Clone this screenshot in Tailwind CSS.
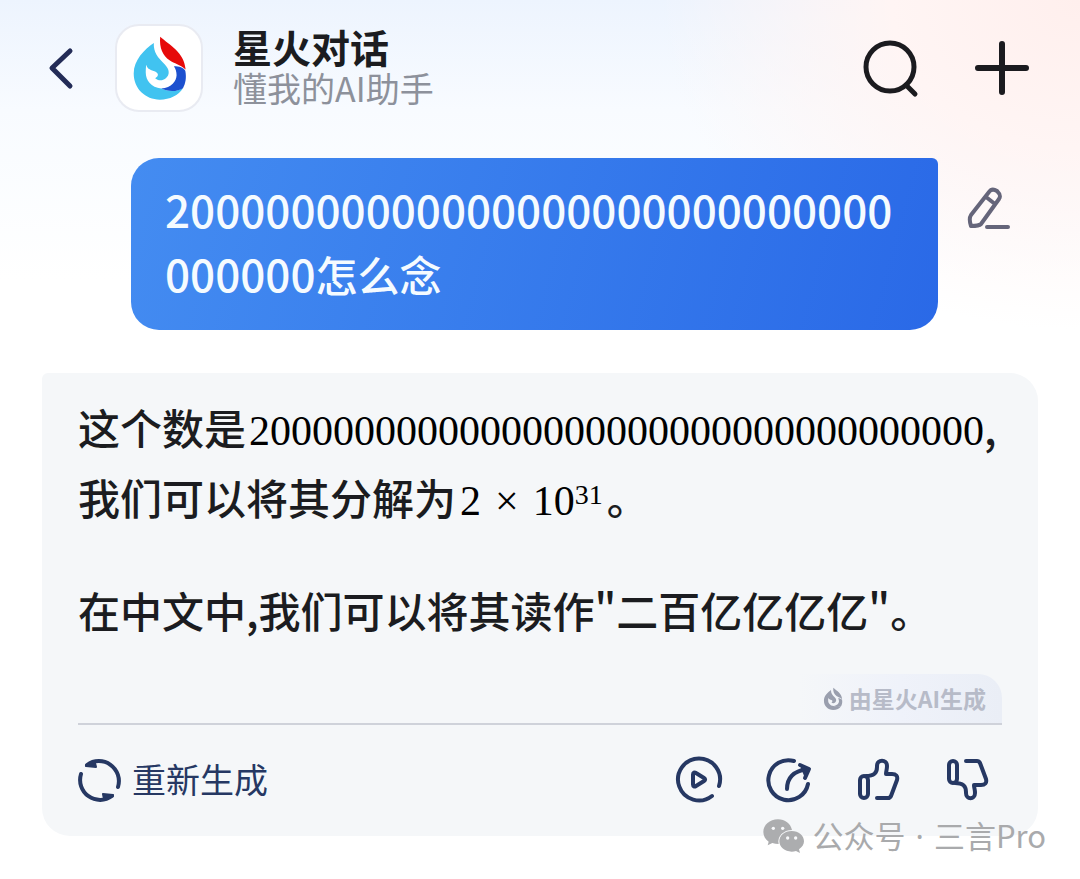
<!DOCTYPE html>
<html lang="zh-CN">

<head>
    <meta charset="UTF-8">
    <meta name="viewport" content="width=device-width, initial-scale=1.0">
    <script src="https://cdn.jsdelivr.net/npm/@tailwindcss/browser@4"></script>
    <title>星火对话</title>
</head>

<body class="min-h-screen bg-white bg-[radial-gradient(ellipse_420px_330px_at_top_right,#ffefed_0%,#fff5f4_45%,transparent_100%),linear-gradient(to_bottom,#edf4fe_0px,#f8fbff_110px,#ffffff_280px)] bg-no-repeat font-['Noto_Sans_CJK_SC',sans-serif] text-[#1b1c20]">

    <!-- header -->
    <header class="flex items-center pt-6 pl-12 pr-[50px]">
        <button type="button" class="w-7" aria-label="返回">
            <svg class="w-7 h-11" viewBox="0 0 28 44" fill="none" stroke="#232c57" stroke-width="5" stroke-linecap="round" stroke-linejoin="round">
                <path d="M22 5 4 22l18 18"></path>
            </svg>
        </button>
        <div class="flex items-center justify-center w-[88px] h-[88px] ml-[39px] bg-white border-2 border-[#e9ebf2] rounded-3xl">
            <svg class="w-[57px] h-[67px]" viewBox="60 45 170 200">
                <path fill="#41c3f0" d="M128 69C100 88 68 120 68 160c0 45 35 78 78 78 30 0 56-13 69-34-19 10-45 10-65 1-30-3-46-25-46-47 0-9 0-17 2-24 3 15 14 15 26 20 10 5 12 13 0 20 7 7 21 9 31 1 14-12 12-27-2-42-22-22-34-36-33-64z"></path>
                <path fill="#1c50cf" d="M188 138c15 0 30 4 34 14 4 20 1 38-7 52-17 11-45 11-65 1 32-3 45-22 46-40 0-11-3-20-8-27z"></path>
                <path fill="#e60a0a" d="M147 50c28 25 72 46 76 98-18-17-33-17-48-28-20-13-31-37-28-70z"></path>
            </svg>
        </div>
        <div class="flex-1 ml-[30px]">
            <h1 class="text-[39px] leading-[40px] font-bold">星火对话</h1>
            <p class="text-[34px] leading-[44px] text-[#8d919b]">懂我的AI助手</p>
        </div>
        <button type="button" aria-label="搜索">
            <svg class="w-14 h-14 overflow-visible" viewBox="0 0 56 56" fill="none" stroke="#1b1b1f" stroke-width="5" stroke-linecap="round">
                <circle cx="28" cy="27" r="24"></circle>
                <path d="m44 45 9 9"></path>
            </svg>
        </button>
        <button type="button" class="ml-14" aria-label="新建对话">
            <svg class="w-14 h-14" viewBox="0 0 56 56" fill="none" stroke="#1b1b1f" stroke-width="6" stroke-linecap="round">
                <path d="M28 4v48M4 28h48"></path>
            </svg>
        </button>
    </header>

    <main class="pt-[46px]">

        <!-- question -->
        <div class="flex items-start pl-[131px] pr-[69px]">
            <div class="flex-1 min-w-0 pt-5 pb-6 pl-[34px] pr-[34px] rounded-[28px] rounded-tr-md bg-linear-105 from-[#448cf1] to-[#2a69e7] text-[42px] leading-[64px] font-medium text-[#f5fbff] wrap-anywhere">
                <span class="text-[44px] leading-none">20000000000000000000000000000000000</span>怎么念
            </div>
            <button type="button" class="mt-7 ml-[29px]" aria-label="编辑">
                <svg class="w-11 h-11" viewBox="0 0 44 44" fill="none" stroke="#65657a" stroke-width="4" stroke-linecap="round" stroke-linejoin="round">
                    <path d="M22 6c2-3 5-3 8-1 3 3 4 5 2 8L14 38c-2 2-7 2-10 2-1-3-2-8 0-11zM19 11l9 7M20 41h21"></path>
                </svg>
            </button>
        </div>

        <!-- answer -->
        <div class="relative mt-[43px] ml-[42px] mr-[42px] pt-[19px] pl-9 pr-9 rounded-[28px] rounded-tl-md bg-[#f5f7f9]">
            <div class="text-[42px] leading-[70px] font-medium">
                <p>这个数是<span class="ml-[3px] font-['Liberation_Serif',serif] font-normal leading-none text-black">20000000000000000000000000000000000</span>,<br>我们可以将其分解为<span class="ml-1 font-['Liberation_Serif',serif] font-normal leading-none text-black">2<span class="mx-[14px]">×</span>10<sup class="top-0 align-[11px] text-[28px] leading-none">31</sup></span><span class="ml-1">。</span></p>
                <p class="mt-[43px]">在中文中,我们可以将其读作"二百亿亿亿亿"。</p>
            </div>

            <div class="flex justify-end mt-[29px] border-b-2 border-[#cfd2da]">
                <div class="flex items-center h-[49px] pl-6 pr-4 gap-[6px] rounded-tr-3xl bg-linear-to-r from-[#f5f7f9] via-[#eff2fa] to-[#eaeef6] text-[23px] font-bold text-[#b7bbc8]">
                    <svg class="w-5 h-6" viewBox="60 45 170 200" fill="#9a9fae">
                        <path d="M128 69C100 88 68 120 68 160c0 45 35 78 78 78 30 0 56-13 69-34-19 10-45 10-65 1-30-3-46-25-46-47 0-9 0-17 2-24 3 15 14 15 26 20 10 5 12 13 0 20 7 7 21 9 31 1 14-12 12-27-2-42-22-22-34-36-33-64z"></path>
                        <path d="M188 138c15 0 30 4 34 14 4 20 1 38-7 52-17 11-45 11-65 1 32-3 45-22 46-40 0-11-3-20-8-27z"></path>
                        <path d="M147 50c28 25 72 46 76 98-18-17-33-17-48-28-20-13-31-37-28-70z"></path>
                    </svg>
                    由星火AI生成
                </div>
            </div>

            <!-- actions -->
            <div class="flex items-center h-[111px] pr-[10px] text-[#263863]">
                <button type="button" class="flex items-center gap-[10px] text-[34px] leading-[44px]">
                    <svg class="w-11 h-11 overflow-visible" viewBox="0 0 44 44" fill="none" stroke="currentColor" stroke-width="4" stroke-linecap="round" stroke-linejoin="round">
                        <path d="M3 15a20 20 0 0 0 31 22M40 28A20 20 0 0 0 9 6"></path>
                        <path fill="currentColor" stroke-width="2" d="M8 7c3-3 6-4 9-3l1 4zM35 36c-3 3-6 4-9 4l-1-5z"></path>
                    </svg>
                    <span class="pb-1">重新生成</span>
                </button>
                <button type="button" class="ml-auto" aria-label="播放">
                    <svg class="w-12 h-12 overflow-visible" viewBox="0 0 48 48" fill="none" stroke="currentColor" stroke-width="4" stroke-linecap="round" stroke-linejoin="round">
                        <path d="M45 29A21 21 0 1 0 38 39"></path>
                        <path d="M19 17.500c0-2 1.500-2.500 3-1.500l8 5c1.500 1 1.500 2 0 3l-8 5c-1.500 1-3 .5-3-1.500z"></path>
                    </svg>
                </button>
                <button type="button" class="ml-[42px]" aria-label="分享">
                    <svg class="w-12 h-12" viewBox="0 0 48 48" fill="none" stroke="currentColor" stroke-width="4" stroke-linecap="round" stroke-linejoin="round">
                        <path d="M30 4A20 20 0 1 0 44 27"></path>
                        <path d="M23 32c0-11 7-18 20-20M36 8l9 4-4 9"></path>
                        <path fill="currentColor" stroke="none" d="m36 8 9 4-4 9-3-7z"></path>
                    </svg>
                </button>
                <button type="button" class="ml-[42px]" aria-label="赞">
                    <svg class="w-12 h-12" viewBox="0 0 48 48" fill="none" stroke="currentColor" stroke-width="4" stroke-linecap="round" stroke-linejoin="round">
                        <rect x="6" y="19" width="8" height="22" rx="4"></rect>
                        <path d="M12 19c8 0 11-3 11-9V9c0-7 10-7 10 0 0 4-1 5-1 8h6c4 0 6 2 5 6l-6 16q-1 2-3 2H23"></path>
                    </svg>
                </button>
                <button type="button" class="ml-[42px]" aria-label="踩">
                    <svg class="w-12 h-12" viewBox="0 0 48 48" fill="none" stroke="currentColor" stroke-width="4" stroke-linecap="round" stroke-linejoin="round">
                        <rect x="5" y="4" width="8" height="22" rx="4"></rect>
                        <path d="M11 26c8 0 11 3 11 9v1c0 7 9 7 9 0 0-4-1-5-1-8h7c4 0 6-2 5-6L36 6q-1-2-3-2H22"></path>
                    </svg>
                </button>
            </div>

            <!-- account mark over the card's corner -->
            <div class="absolute -right-2 -bottom-[22px] flex items-center gap-2 text-[31px] leading-[44px] text-[#a9aaac] whitespace-nowrap">
                <svg class="w-[42px] h-[34px]" viewBox="0 0 126 102">
                    <path fill="#acadaf" d="M45 1C20 1 1 18 1 39c0 12 6 22 16 29l-3 11 14-7c6 2 12 3 19 3-5-23 14-42 40-42C83 14 66 1 45 1z"></path>
                    <path fill="#acadaf" d="M86 36c-21 0-37 14-37 31s16 31 37 31c5 0 9-1 13-2l12 6-3-11c9-6 15-14 15-24 0-17-16-31-37-31z"></path>
                    <g fill="#f8f9fb">
                        <circle cx="31" cy="28" r="5"></circle>
                        <circle cx="59" cy="28" r="5"></circle>
                        <circle cx="74" cy="57" r="5"></circle>
                        <circle cx="98" cy="57" r="5"></circle>
                    </g>
                </svg>
                <p>公众号<span class="mx-[10px] font-['Noto_Sans']">·</span>三言Pro</p>
            </div>
        </div>

    </main>
</body>

</html>
